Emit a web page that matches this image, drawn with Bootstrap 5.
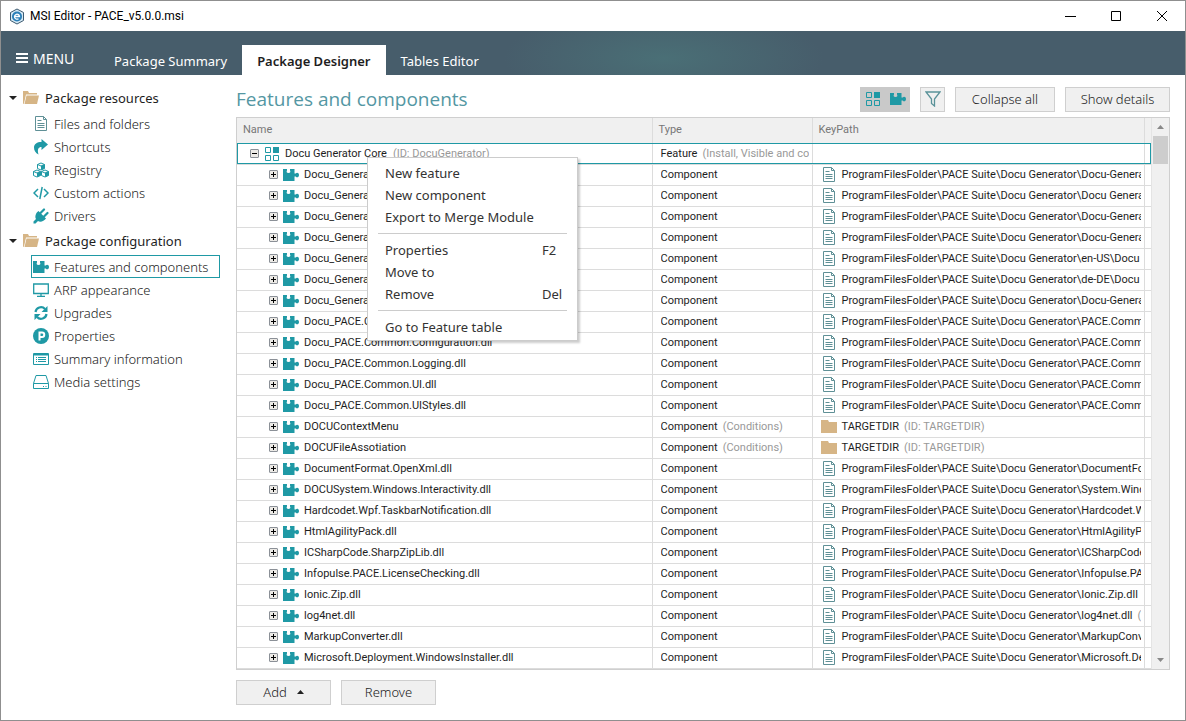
<!DOCTYPE html>
<html lang="en">
<head>
<meta charset="utf-8">
<meta name="viewport" content="width=device-width, initial-scale=1">
<title>MSI Editor - PACE_v5.0.0.msi</title>
<link rel="stylesheet" href="https://cdn.jsdelivr.net/npm/bootstrap@5.3.0/dist/css/bootstrap.min.css">
<style>
:root{--teal:#1f99a5;--line:#dcdcdc;--edge:#cfcfcf;--ink:#1e1e1e}
body{font:13px/20px "Noto Sans","Open Sans",sans-serif;color:var(--ink);background:#fff;min-height:100vh;border:1px solid #8f8f8f}
svg{display:block;flex:none}
.titlebar{height:30px;padding-left:8px;gap:5px;font:12px/20px Roboto,sans-serif;color:#000}
.titlebar button{width:46px;height:30px;border:0;background:none;padding:0}
.ribbon{height:44px;background:radial-gradient(ellipse 160px 50px at 56% 62%,#4a6f76,#4a6f7600),#475d6b}
.menu-btn{border:0;background:none;color:#fff;font-size:14px;width:98px;padding:12px 0 0 14px;height:44px}
.ribbon .nav-link{color:#fff;padding:6px 15px 4px;border-radius:0;height:30px;line-height:20px}
.ribbon .nav-link.active{background:#fff;color:var(--ink);font-weight:600}
.side{width:219px;padding-top:9px}
.side summary{height:28px;list-style:none;padding-left:8px;gap:6px}
.side summary::-webkit-details-marker{display:none}
.side a{height:23px;margin-left:30px;padding-left:1px;gap:5px;color:#222;font-weight:300;text-decoration:none;border:1px solid transparent}
.side a.active{border-color:var(--teal)}
.work{padding:11px 15px 12px 16px;min-width:0}
.gap-tool{gap:10px}
.page-title{font:19px/26px "Open Sans",sans-serif;color:#5497a3}
.tool{height:25px;border:1px solid var(--edge);background:#f0f0f0;border-radius:0;padding:0;font-size:13px;line-height:23px;font-weight:300;color:#222}
.tool.on{background:#c9c9c9;border-color:#c9c9c9}
.w-s{width:25px}.w-m{width:95px}.w-l{width:100px}.w-xl{width:105px}
.panel{border:1px solid var(--edge);margin:5px 0 10px}
.grid{table-layout:fixed;width:100%;font:11px/18px Roboto,sans-serif;margin:0}
.grid th,.grid td{height:21px;padding:0 3px 0 8px;border-right:1px solid var(--line);border-bottom:1px solid var(--line);overflow:hidden;white-space:nowrap}
.grid th{height:25px;background:#f0f0f0;color:#777;font-weight:400;padding-left:6px}
.grid th:last-child,.grid td:last-child{border-right:0;padding:0}
.grid td>div{display:flex;align-items:center;gap:5px;overflow:hidden;height:20px}
.grid td:first-child{padding-left:32px}
.grid tr.sel td:first-child{padding-left:13px}
.grid tr.sel td:first-child div{gap:6px}
.grid tr.sel{outline:1px solid var(--teal);outline-offset:-1px}
.grid i{font-style:normal;color:#999}
.c-name{width:415px}.c-type{width:160px}.c-end{width:7px}
.exp{width:9px;height:9px;border:1px solid #8b9097;border-radius:1px;padding:0;flex:none;background:linear-gradient(#000,#000) center/5px 1px no-repeat,linear-gradient(#000,#000) center/1px 5px no-repeat,#eceae6}
.exp.open{background:linear-gradient(#000,#000) center/5px 1px no-repeat,#eceae6}
.bar{width:18px;background:#f0f0f0;border-left:1px solid #e4e4e4;padding:7px 1px}
.thumb{width:15px;height:28px;background:#cdcdcd;margin-top:7px}
.ctx{--bs-dropdown-font-size:13px;top:39px;left:130px;width:211px;padding:4px 10px 2px;border:1px solid #ccc;border-radius:0;box-shadow:2px 2px 2px #0003;--bs-dropdown-item-padding-x:7px;--bs-dropdown-item-padding-y:0}
.ctx .dropdown-item{height:22px;line-height:22px;color:#333;display:flex}
.ctx kbd{margin-left:auto;width:18px;font:inherit;color:inherit;background:none;padding:0}
.ctx hr{margin:5px 0;border-color:#ccc;opacity:1}
</style>
<script defer src="https://cdn.jsdelivr.net/npm/bootstrap@5.3.0/dist/js/bootstrap.bundle.min.js"></script>
</head>
<body class="d-flex flex-column">
<svg width="0" height="0" class="position-absolute" aria-hidden="true">
<symbol id="puz" viewBox="0 0 16 14"><path fill="#1f99a5" d="M0 1h4v1.500C3.300 3.500 3.500 5 5.500 5S7.700 3.500 7 2.500V1h4.500v4.500h1.300C13.500 4 16 4.500 16 7s-2.500 3-3.200 1.500h-1.300V13H0z"/></symbol>
<symbol id="feat" viewBox="0 0 14 14"><path fill="none" stroke="#1f99a5" d="M.5.5h5v5h-5zM.5 8.500h5v5h-5zM8.500 8.500h5v5h-5z"/><path fill="#1f99a5" d="M8 0h6v6H8z"/></symbol>
<symbol id="doc" viewBox="0 0 12 15"><path fill="none" stroke="#5f9096" d="M.5.5h8l3 3v11H.5zM8.500.5v3h3M2.500 4.500h4M2.500 7.500h7M2.500 9.500h7M2.500 11.500h7"/></symbol>
<symbol id="dir" viewBox="0 0 16 13"><path fill="#d6b586" d="M0 0h7l1 2h8v11H0z"/></symbol>
<symbol id="dir-open" viewBox="0 0 16 14"><path fill="#d6b586" d="M0 0h5l1 2h8v1.500H3L1 12.500 0 13z"/><path fill="#d6b586" d="M3.500 4.500H16L14 13H1.500z"/></symbol>
</svg>

<header class="titlebar d-flex align-items-center">
<svg width="16" height="17" viewBox="0 0 16 17"><path fill="#d5e9f5" stroke="#3d5a70" d="M8 1l6.500 3.500v8L8 16l-6.500-3.500v-8z"/><circle cx="8" cy="8.500" r="5" fill="#2a7fb8"/><path d="M5.500 8.500h5a2.500 2.500 0 1 0-1 2.200" fill="none" stroke="#fff" stroke-width="1.300"/></svg>
<span>MSI Editor - PACE_v5.0.0.msi</span>
<div class="ms-auto d-flex">
<button type="button" aria-label="Minimize"><svg class="mx-auto" width="12" height="12"><path stroke="#000" d="M1 6.500h11"/></svg></button>
<button type="button" aria-label="Maximize"><svg class="mx-auto" width="12" height="12"><path fill="none" stroke="#000" d="M1.500 1.500h9v9h-9z"/></svg></button>
<button type="button" aria-label="Close"><svg class="mx-auto" width="12" height="12"><path stroke="#000" d="M1 1l10 10M11 1L1 11"/></svg></button>
</div>
</header>

<nav class="ribbon d-flex align-items-end">
<button type="button" class="menu-btn d-flex align-items-center gap-1"><svg width="14" height="12"><path stroke="#fff" stroke-width="2" d="M1 1h12M1 5h12M1 9h12"/></svg>MENU</button>
<ul class="nav nav-pills">
<li class="nav-item"><a class="nav-link" href="#summary">Package Summary</a></li>
<li class="nav-item"><a class="nav-link active" aria-current="page" href="#designer">Package Designer</a></li>
<li class="nav-item"><a class="nav-link" href="#tables">Tables Editor</a></li>
</ul>
</nav>

<div class="d-flex flex-grow-1">
<aside class="side flex-shrink-0">
<details open>
<summary class="d-flex align-items-center"><svg width="8" height="4"><path d="M0 0h8L4 4z" fill="#222"/></svg><svg width="16" height="14"><use href="#dir-open"/></svg><span>Package resources</span></summary>
<a href="#files" class="d-flex align-items-center"><svg width="16" height="15"><use href="#doc"/></svg>Files and folders</a>
<a href="#shortcuts" class="d-flex align-items-center"><svg width="16" height="16"><path fill="#1f99a5" d="M8.500 0L15 5.500 8.500 11V8C5.500 8 4 10 5.500 15.500 2.500 14 1 11.500 1 8.500 1 5 4 3 8.500 3z"/></svg>Shortcuts</a>
<a href="#registry" class="d-flex align-items-center"><svg width="16" height="16"><g fill="#fff" stroke="#1f99a5"><path d="M8 1l3.500 1.500v4L8 8 4.500 6.500v-4zM4.500 2.500L8 4l3.500-1.500"/><path d="M4 8l3.500 1.500v4L4 15 .5 13.500v-4zM.5 9.500L4 11l3.500-1.500M12 8l3.500 1.500v4L12 15l-3.500-1.500v-4zM8.500 9.500L12 11l3.500-1.500"/></g><path fill="#1f99a5" d="M8 4l3.500-1.500v4L8 8zM4 11l3.500-1.500v4L4 15zM12 11l3.500-1.500v4L12 15z"/></svg>Registry</a>
<a href="#actions" class="d-flex align-items-center"><svg width="16" height="14"><path fill="none" stroke="#1f99a5" stroke-width="1.500" d="M5 3L1 7l4 4M11 3l4 4-4 4M9.200 1L6.800 13"/></svg>Custom actions</a>
<a href="#drivers" class="d-flex align-items-center"><svg width="16" height="16"><path fill="#1f99a5" d="M5.500 3l7.500 7.500c-2 3-6 4-8 2.500L2.500 15.500.5 15.500v-2L3 11C1.500 8.500 3 4.500 5.500 3z"/><path stroke="#1f99a5" stroke-width="2.200" stroke-linecap="round" d="M7.500 5L11 1.500M11 8.500L14.500 5"/></svg>Drivers</a>
</details>
<details open>
<summary class="d-flex align-items-center"><svg width="8" height="4"><path d="M0 0h8L4 4z" fill="#222"/></svg><svg width="16" height="14"><use href="#dir-open"/></svg><span>Package configuration</span></summary>
<a href="#features" class="active d-flex align-items-center"><svg width="16" height="14"><use href="#puz"/></svg>Features and components</a>
<a href="#arp" class="d-flex align-items-center"><svg width="16" height="14"><path fill="none" stroke="#1f99a5" stroke-width="1.300" d="M.7 1h14.600v9.500H.7z"/><path stroke="#1f99a5" stroke-width="1.300" d="M8 10v3M4 13.300h8"/></svg>ARP appearance</a>
<a href="#upgrades" class="d-flex align-items-center"><svg width="16" height="16"><path fill="none" stroke="#1f99a5" stroke-width="2.200" d="M2.500 7a5.500 5.500 0 0 1 9.500-3M13.500 9a5.500 5.500 0 0 1-9.500 3"/><path fill="#1f99a5" d="M14.500 1v6h-6zM1.500 15V9h6z"/></svg>Upgrades</a>
<a href="#properties" class="d-flex align-items-center"><svg width="16" height="16"><circle cx="8" cy="8" r="8" fill="#1f99a5"/><path fill="none" stroke="#fff" stroke-width="2" d="M6.500 12.500V4.500H9a2.200 2.200 0 0 1 0 4.500H6.500"/></svg>Properties</a>
<a href="#information" class="d-flex align-items-center"><svg width="16" height="14"><path fill="none" stroke="#1f99a5" d="M.5 1.500h15v11H.5z"/><path stroke="#1f99a5" stroke-width="2" d="M1 2.500h14"/><path stroke="#1f99a5" d="M3 5.500h1M5 5.500h8M3 7.500h1M5 7.500h8M3 9.500h1M5 9.500h8"/></svg>Summary information</a>
<a href="#media" class="d-flex align-items-center"><svg width="16" height="14"><path fill="none" stroke="#1f99a5" d="M.5 8.500L3 .5h10l2.500 8v5H.5zM.5 8.500h15M10 11.500h1M12.500 11.500h1"/></svg>Media settings</a>
</details>
</aside>

<main class="work flex-grow-1">
<div class="d-flex align-items-center gap-tool">
<h1 class="page-title mb-0 me-auto">Features and components</h1>
<div class="d-flex">
<button type="button" class="tool on w-s" aria-label="Features"><svg class="mx-auto" width="14" height="14"><use href="#feat"/></svg></button>
<button type="button" class="tool on w-s" aria-label="Components"><svg class="mx-auto" width="16" height="14"><use href="#puz"/></svg></button>
</div>
<button type="button" class="tool w-s" aria-label="Filter"><svg class="mx-auto" width="16" height="16"><path fill="none" stroke="#5a9299" stroke-width="1.300" d="M1 1h14L9.500 8v7l-3-2.500V8z"/></svg></button>
<button type="button" class="tool w-l">Collapse all</button>
<button type="button" class="tool w-xl">Show details</button>
</div>

<div class="panel d-flex position-relative">
<div class="flex-grow-1 overflow-hidden">
<table class="grid">
<colgroup><col class="c-name"><col class="c-type"><col><col class="c-end"></colgroup>
<thead><tr><th scope="col">Name</th><th scope="col">Type</th><th scope="col">KeyPath</th><th></th></tr></thead>
<tbody id="rows">
<tr class="sel"><td><div><button type="button" class="exp open" aria-label="Collapse"></button><svg width="14" height="14"><use href="#feat"/></svg>Docu Generator Core<i>(ID: DocuGenerator)</i></div></td><td><div>Feature<i>(Install, Visible and collapsed)</i></div></td><td></td><td></td></tr>
</tbody>
</table>
</div>
<div class="bar flex-shrink-0 d-flex flex-column align-items-center" aria-hidden="true">
<svg width="7" height="4"><path fill="#888" d="M0 4h7L3.500 0z"/></svg><div class="thumb"></div>
<svg class="mt-auto" width="7" height="4"><path fill="#888" d="M0 0h7L3.500 4z"/></svg>
</div>
<ul class="dropdown-menu show ctx">
<li><button type="button" class="dropdown-item">New feature</button></li>
<li><button type="button" class="dropdown-item">New component</button></li>
<li><button type="button" class="dropdown-item">Export to Merge Module</button></li>
<li><hr></li>
<li><button type="button" class="dropdown-item">Properties<kbd>F2</kbd></button></li>
<li><button type="button" class="dropdown-item">Move to</button></li>
<li><button type="button" class="dropdown-item">Remove<kbd>Del</kbd></button></li>
<li><hr></li>
<li><button type="button" class="dropdown-item">Go to Feature table</button></li>
</ul>
</div>

<div class="d-flex gap-tool">
<button type="button" class="tool w-m d-flex align-items-center justify-content-center gap-tool">Add<svg width="7" height="4"><path fill="#222" d="M0 4h7L3.500 0z"/></svg></button>
<button type="button" class="tool w-m">Remove</button>
</div>
</main>
</div>
<script>
// [component name, file below the product folder, file id]; no file means TARGETDIR with a condition
const components = [
  ["Docu_Generator", "Docu-Generator"],
  ["Docu_Generator", "Docu Generator"],
  ["Docu_Generator", "Docu-Generator"],
  ["Docu_Generator", "Docu-Generator"],
  ["Docu_Generator", "en-US\\Docu Generator"],
  ["Docu_Generator", "de-DE\\Docu Generator"],
  ["Docu_Generator", "Docu-Generator"],
  ["Docu_PACE.Common.dll", "PACE.Common.dll"],
  ["Docu_PACE.Common.Configuration.dll", "PACE.Common.Configuration.dll"],
  ["Docu_PACE.Common.Logging.dll", "PACE.Common.Logging.dll"],
  ["Docu_PACE.Common.UI.dll", "PACE.Common.UI.dll"],
  ["Docu_PACE.Common.UIStyles.dll", "PACE.Common.UIStyles.dll"],
  ["DOCUContextMenu"],
  ["DOCUFileAssotiation"],
  ["DocumentFormat.OpenXml.dll", "DocumentFormat.OpenXml.dll"],
  ["DOCUSystem.Windows.Interactivity.dll", "System.Windows.Interactivity.dll"],
  ["Hardcodet.Wpf.TaskbarNotification.dll", "Hardcodet.Wpf.TaskbarNotification.dll"],
  ["HtmlAgilityPack.dll", "HtmlAgilityPack.dll"],
  ["ICSharpCode.SharpZipLib.dll", "ICSharpCode.SharpZipLib.dll"],
  ["Infopulse.PACE.LicenseChecking.dll", "Infopulse.PACE.LicenseChecking.dll"],
  ["Ionic.Zip.dll", "Ionic.Zip.dll", "Ionic.Zip.dll"],
  ["log4net.dll", "log4net.dll", "log4net.dll"],
  ["MarkupConverter.dll", "MarkupConverter.dll"],
  ["Microsoft.Deployment.WindowsInstaller.dll", "Microsoft.Deployment.WindowsInstaller.dll"]
];
const root = "ProgramFilesFolder\\PACE Suite\\Docu Generator\\";
document.getElementById("rows").insertAdjacentHTML("beforeend", components.map(([name, file, id]) => `<tr>
<td><div><button type="button" class="exp" aria-label="Expand"></button><svg width="16" height="14"><use href="#puz"/></svg>${name}</div></td>
<td><div>Component${file ? "" : "<i>(Conditions)</i>"}</div></td>
<td><div>${file
  ? `<svg width="16" height="15"><use href="#doc"/></svg>${root}${file}${id ? `<i>(ID: ${id})</i>` : ""}`
  : `<svg width="16" height="13"><use href="#dir"/></svg>TARGETDIR<i>(ID: TARGETDIR)</i>`}</div></td>
<td></td></tr>`).join(""));
</script>
</body>
</html>
